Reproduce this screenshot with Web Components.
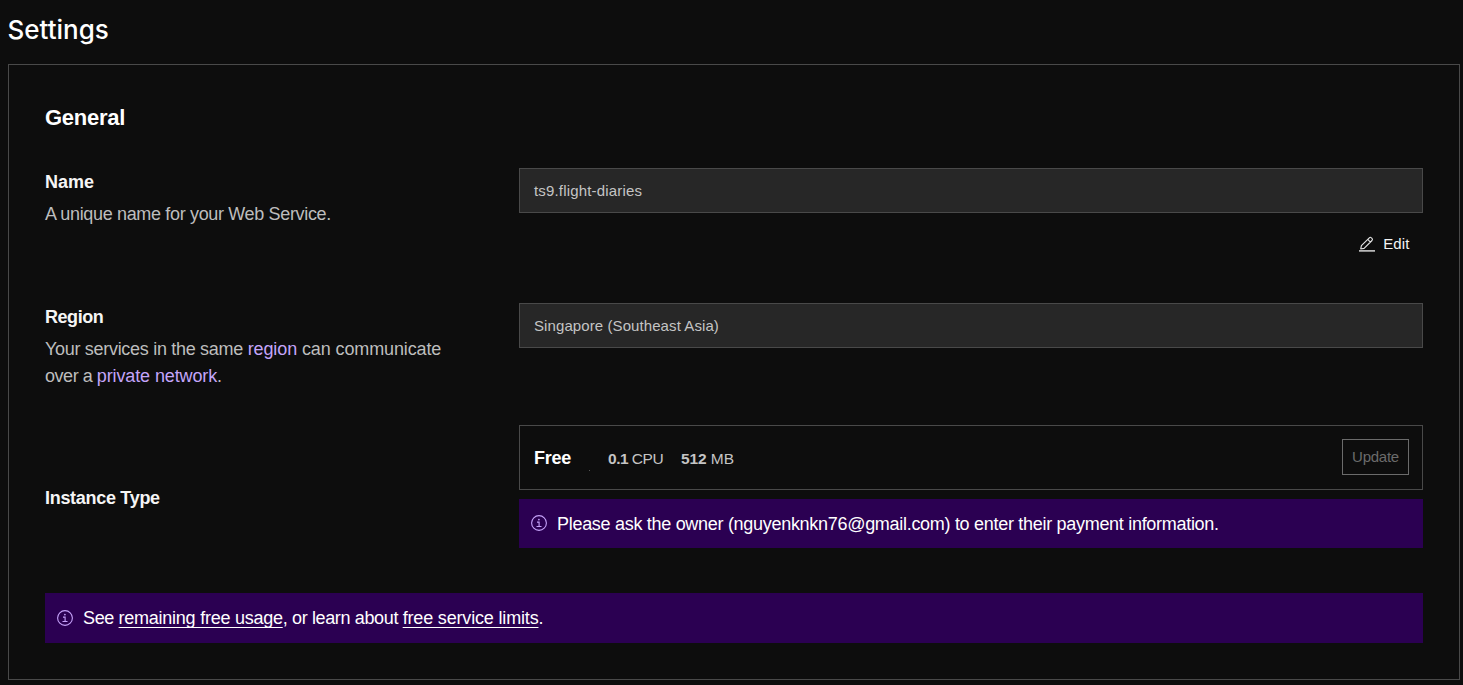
<!DOCTYPE html>
<html lang="en">
<head>
<meta charset="utf-8">
<title>Settings</title>
<style>
html, body { margin: 0; background: #0d0d0d; }
body { height: 685px; overflow: hidden; color: #fff; font: 18px/27px "Liberation Sans", Arial, sans-serif; }
</style>
</head>
<body>
<settings-page></settings-page>
<script>
const define = (name, markup) => customElements.define(name, class extends HTMLElement {
  constructor() {
    super();
    this.attachShadow({ mode: "open" }).innerHTML = markup;
  }
});

define("info-icon", `
<style>:host { display: block; width: 16px; height: 16px; color: #c6a2fa; } svg { display: block; }</style>
<svg width="16" height="16" viewBox="0 0 16 16" fill="none" stroke="currentColor" stroke-width="1.1">
  <circle cx="8" cy="8" r="7.4"/>
  <path d="M6 7.1h2.1v4.3M5.5 11.5h5"/>
  <circle cx="7.9" cy="4.6" r=".85" fill="currentColor" stroke="none"/>
</svg>`);

define("pencil-icon", `
<style>:host { display: block; width: 16px; height: 16px; color: #e3e3e3; } svg { display: block; }</style>
<svg width="16" height="16" viewBox="0 0 16 16" fill="none" stroke="currentColor" stroke-linejoin="round">
  <path d="M1.7 13l.7-3.3 7.9-7.9c.7-.7 1.5-.7 2.1 0l.6.6c.6.6.6 1.4 0 2.1L5.1 12.4zM8.7 3.4l2.7 2.7" stroke-width="1.15"/>
  <path d="M0 14.9h16" stroke-width="1.4"/>
</svg>`);

define("info-banner", `
<style>
:host { display: flex; align-items: flex-start; gap: 10px; box-sizing: border-box; height: 49px; padding: 12px 12px 0; background: #2b0052; color: #fff; letter-spacing: -.295px; white-space: nowrap; }
info-icon { margin-top: var(--icon-top, 4px); }
</style>
<info-icon></info-icon><div><slot></slot></div>`);

define("read-only-field", `
<style>
:host { display: flex; align-items: center; box-sizing: border-box; height: 45px; padding: 0 14px; background: #272727; border: 1px solid #494949; color: #c4c4c4; font-size: 15px; line-height: 20px; letter-spacing: var(--field-spacing, .09px); }
</style>
<slot></slot>`);

define("edit-button", `
<style>
:host { display: flex; justify-content: flex-end; padding: 21px 13.6px 0 0; }
button { all: unset; display: flex; align-items: center; gap: 8px; font-size: 15px; line-height: 20px; letter-spacing: .1px; color: #f4f4f4; }
</style>
<button><pencil-icon></pencil-icon><slot></slot></button>`);

define("setting-row", `
<style>
:host { display: grid; grid-template-columns: 474px 904px; }
.label { max-width: 420px; padding-top: var(--label-offset, 1px); white-space: nowrap; }
.title { font-weight: 700; color: #f5f5f5; letter-spacing: var(--title-spacing, -.3px); }
.text { margin-top: 5px; color: #bdbdbd; letter-spacing: var(--text-spacing, -.25px); }
</style>
<div class="label">
  <div class="title"><slot name="title"></slot></div>
  <div class="text"><slot name="text"></slot></div>
</div>
<div><slot></slot></div>`);

define("instance-card", `
<style>
:host { display: flex; align-items: center; box-sizing: border-box; height: 65px; margin-bottom: 9px; padding: 0 13px 0 14px; border: 1px solid #494949; }
.plan { width: 55px; padding-top: 2px; font-weight: 700; letter-spacing: -.25px; }
.speck { width: 1px; height: 1px; margin: 25px 18px 0 0; background: #555; }
.spec { box-sizing: border-box; width: 73px; padding-top: 2px; font-size: 15.5px; letter-spacing: -.4px; color: #c4c4c4; display: flex; gap: 3.5px; }
.spec + .spec { gap: 4.2px; letter-spacing: 0; }
b { letter-spacing: -.45px; }
.spec + .spec b { letter-spacing: -.1px; }
button { all: unset; box-sizing: border-box; width: 67px; height: 36px; margin: 0 0 1px auto; border: 1px solid #6b6b6b; color: #6b6b6b; font-size: 15px; line-height: 34px; letter-spacing: -.25px; text-align: center; }
</style>
<div class="plan">Free</div><div class="speck"></div>
<div class="spec"><b>0.1</b><span>CPU</span></div>
<div class="spec"><b>512</b><span>MB</span></div>
<button>Update</button>`);

define("settings-page", `
<style>
:host { display: block; padding: 14px 3px 0 8px; }
h1 { margin: 0; height: 50px; font: 500 26px/32px Inter, sans-serif; letter-spacing: 0; text-indent: -.5px; color: #fff; }
section { box-sizing: border-box; height: 616px; border: 1px solid #494949; padding: 39px 36px 0; }
h2 { margin: 0 0 36px; font-size: 22px; line-height: 28px; letter-spacing: -.25px; color: #fff; }
.name { height: 135px; --title-spacing: 0px; --text-spacing: -.34px; --field-spacing: .17px; }
.region { height: 122px; --title-spacing: -.45px; }
.instance { height: 168px; --label-offset: 60px; }
.line { display: block; }
.region-link { color: #c4a5fa; letter-spacing: -.1px; }
.network-link { color: #c4a5fa; letter-spacing: -.12px; }
.usage { height: 50px; --icon-top: 5px; }
.underlined { color: #fff; text-decoration: underline 1px; text-underline-offset: 3px; text-decoration-skip-ink: none; }
.underlined.one { letter-spacing: -.25px; }
.underlined.two { letter-spacing: -.17px; }
.tight { letter-spacing: -.36px; }
.over { letter-spacing: -.46px; }
.lead { letter-spacing: -.3px; }
.tail { letter-spacing: -.12px; }
</style>
<h1>Settings</h1>
<section>
  <h2>General</h2>
  <setting-row class="name">
    <span slot="title">Name</span>
    <span slot="text">A unique name for your Web Service.</span>
    <read-only-field>ts9.flight-diaries</read-only-field>
    <edit-button>Edit</edit-button>
  </setting-row>
  <setting-row class="region">
    <span slot="title">Region</span>
    <span slot="text"><span class="line"><span class="lead">Your services in the same </span><a class="region-link">region</a><span class="tail"> can communicate</span></span><span class="line"><span class="over">over a </span><a class="network-link">private network</a><span>.</span></span></span>
    <read-only-field>Singapore (Southeast Asia)</read-only-field>
  </setting-row>
  <setting-row class="instance">
    <span slot="title">Instance Type</span>
    <instance-card></instance-card>
    <info-banner>Please ask the owner (nguyenknkn76@gmail.com) to enter their payment information.</info-banner>
  </setting-row>
  <info-banner class="usage"><span class="tight">See </span><a class="underlined one">remaining free usage</a><span class="tight">, or learn about </span><a class="underlined two">free service limits</a><span>.</span></info-banner>
</section>`);
</script>
</body>
</html>
